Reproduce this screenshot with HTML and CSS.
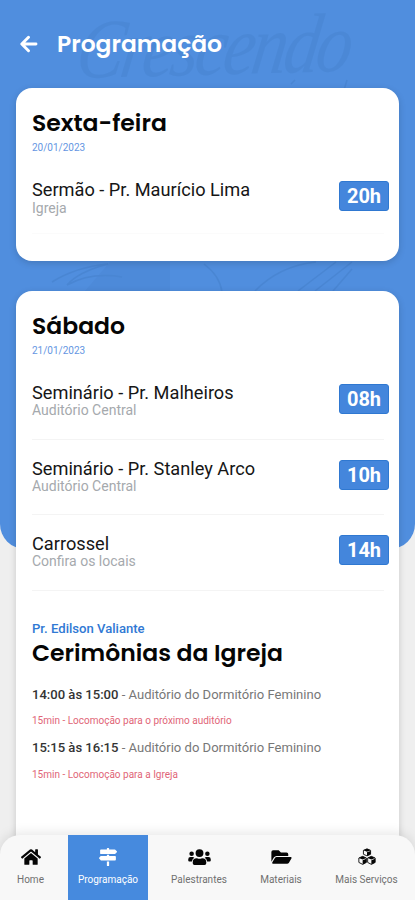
FILE: index.html
```html
<!DOCTYPE html>
<html lang="pt-BR">
<head>
<meta charset="utf-8">
<title>Programação</title>
<link rel="stylesheet" href="styles.css">
</head>
<body>
<main class="screen">
  <div class="backdrop" aria-hidden="true">
    <span class="watermark">Crescendo</span>
    <svg class="sketch" viewBox="0 0 415 549" fill="none">
      <path d="M347 80l-3 10M291 84l4-4M52 282q24-15 56-18-30 8-41 21 24-13 55-8M204 264q16 12 18 28M255 291q24-25 61-29M298 291l38-29M315 291l37-29M333 291l19-22"/>
      <path class="shade" d="M110 262h60v29H85z"/>
    </svg>
  </div>

  <header class="topbar">
    <svg class="back" viewBox="0 0 18 18"><path d="M16 9H2.5M8.5 2.2L1.8 9l6.7 6.8"/></svg>
    <h1>Programação</h1>
  </header>

  <section class="card card-short">
    <h2>Sexta-feira</h2>
    <p class="date">20/01/2023</p>
    <div class="row">
      <div><p class="name">Sermão - Pr. Maurício Lima</p><p class="place">Igreja</p></div>
      <span class="hour">20h</span>
    </div>
  </section>

  <section class="card card-long">
    <h2>Sábado</h2>
    <p class="date">21/01/2023</p>
    <div class="row">
      <div><p class="name">Seminário - Pr. Malheiros</p><p class="place">Auditório Central</p></div>
      <span class="hour">08h</span>
    </div>
    <div class="row">
      <div><p class="name">Seminário - Pr. Stanley Arco</p><p class="place">Auditório Central</p></div>
      <span class="hour">10h</span>
    </div>
    <div class="row">
      <div><p class="name">Carrossel</p><p class="place">Confira os locais</p></div>
      <span class="hour">14h</span>
    </div>
    <p class="speaker">Pr. Edilson Valiante</p>
    <h2>Cerimônias da Igreja</h2>
    <div class="slots">
      <p class="slot"><b>14:00 às 15:00</b> - Auditório do Dormitório Feminino</p>
      <p class="move">15min - Locomoção para o próximo auditório</p>
      <p class="slot"><b>15:15 às 16:15</b> - Auditório do Dormitório Feminino</p>
      <p class="move">15min - Locomoção para a Igreja</p>
    </div>
  </section>

  <nav class="tabs">
    <a class="tab tab-home">
      <svg viewBox="0 0 576 512"><path d="M280 148L96 300v164q0 16 16 16l112-1q16 0 16-16v-95q0-16 16-16h64q16 0 16 16v95q0 16 16 16l112 1q16 0 16-16V300L296 148q-8-6-16 0zM572 251l-84-69V44q0-12-12-12h-56q-12 0-12 12v72l-90-74q-30-24-60 0L4 251q-9 8-2 17l26 31q8 9 17 2L280 107q8-6 16 0l235 194q9 7 17-2l26-31q7-9-2-17z"/></svg>
      <span>Home</span>
    </a>
    <a class="tab tab-program active">
      <svg viewBox="0 0 512 512"><path d="M507 92l-43-43q-7-7-17-7H288V16q0-16-16-16h-32q-16 0-16 16v26H56q-24 0-24 24v80q0 24 24 24h391q10 0 17-7l43-43q11-14 0-28zM224 496q0 16 16 16h32q16 0 16-16V384h-64zm232-272H288v-32h-64v32H65q-10 0-17 7L5 274q-11 14 0 28l43 43q7 7 17 7h391q24 0 24-24v-80q0-24-24-24z"/></svg>
      <span>Programação</span>
    </a>
    <a class="tab tab-speakers">
      <svg viewBox="0 0 640 512"><circle cx="96" cy="160" r="64"/><circle cx="544" cy="160" r="64"/><circle cx="320" cy="144" r="112"/><path d="M64 256h64q25 0 44 18-59 32-68 110H32q-32 0-32-32v-32q0-64 64-64zM576 256h-64q-25 0-44 18 59 32 68 110h72q32 0 32-32v-32q0-64-64-64zM243 288h8q69 32 138 0h8q115 0 115 115v29q0 48-48 48H176q-48 0-48-48v-29q0-115 115-115z"/></svg>
      <span>Palestrantes</span>
    </a>
    <a class="tab tab-files">
      <svg viewBox="0 0 576 512"><path d="M573 292l-73 124q-20 32-54 32H45q-27 0-21-36l73-124q20-32 54-32h400q30 0 22 36zM151 224h329v-48q0-48-48-48H272l-64-64H48Q0 64 0 112v278l70-118q27-48 81-48z"/></svg>
      <span>Materiais</span>
    </a>
    <a class="tab tab-more">
      <svg viewBox="0 0 512 512"><path class="cube" d="M256 24l102 42v112l-102 46-102-46V66zM132 238l106 46v126l-106 56-108-56V284zM380 238l108 46v126l-108 56-106-56V284z"/><path d="M154 66l102 38 102-38-102-42zM256 120v104l102-46V85zM24 284l108 44 106-44-106-46zM132 346v120l106-56V303zM274 284l106 44 108-44-108-46zM380 346v120l108-56V303z"/></svg>
      <span>Mais Serviços</span>
    </a>
  </nav>
</main>
</body>
</html>
```

FILE: styles.css
```css
* { box-sizing: border-box; }
body { margin: 0; background: #efefef; font-family: Roboto, "Liberation Sans", sans-serif; }
h1, h2, p { margin: 0; white-space: nowrap; }
h1, h2 { font-family: Poppins, Inter, sans-serif; font-weight: 600; }

.screen { position: relative; height: 900px; overflow: hidden; padding: 0 16px; }

.backdrop {
  position: absolute; inset: 0 0 auto; height: 549px; overflow: hidden;
  background: #508ede; border-radius: 0 0 25px 25px;
}
.watermark {
  position: absolute; left: 78px; top: -4px;
  font: italic 84px/108px "Liberation Serif", serif; letter-spacing: -4px;
  color: #4884d0; opacity: .5; transform-origin: 0 50%;
  transform: rotate(-1.5deg) skewX(-10deg) scaleX(.85);
}
.sketch { position: absolute; inset: 0; stroke: #4681cc; stroke-width: 1.5; opacity: .6; }
.sketch .shade { fill: #4681cc; stroke: none; opacity: .45; }

.topbar { position: relative; height: 88px; display: flex; align-items: center; gap: 19px; padding-left: 4px; }
.topbar h1 { font-size: 23.4px; line-height: 30px; color: #fff; }
.back { width: 18px; height: 18px; fill: none; stroke: #fff; stroke-width: 2.9; stroke-linecap: round; stroke-linejoin: round; }

.card {
  position: relative; width: 383px; padding: 18px 15px 0 16px;
  background: #fff; border-radius: 16px; box-shadow: 0 2px 7px rgba(0, 0, 0, .16);
}
.card-short { height: 173px; margin-bottom: 30px; }
.card-long { height: 640px; }
.card h2 { font-size: 23.5px; line-height: 34px; color: #050505; }
.date { font-size: 10px; line-height: 16px; color: #6596e2; margin-bottom: 9px; }

.row {
  display: flex; justify-content: space-between; align-items: flex-start;
  height: 75.3px; padding-top: 18px; border-bottom: 1px solid #f4f4f4;
}
.date + .row { height: 72px; padding-top: 14px; }
.card-short .date + .row { border-color: #fbfbfb; height: 69px; }
.name { font-size: 18.2px; line-height: 21px; color: #161616; }
.place { font-size: 14px; line-height: 15px; color: #a5a9ad; }
.card-short .place { line-height: 17px; }
.hour {
  width: 50px; height: 30px; margin: 2px -5px 0 0; border: 1px solid #2f78d1; border-radius: 3px;
  background: #4486dc; color: #fff; font-size: 20px; font-weight: 700; line-height: 29px; text-align: center;
}

.speaker { margin-top: 30px; font-size: 13.1px; line-height: 16px; font-weight: 500; color: #3079d4; }
.card .speaker + h2 { line-height: 32px; }
.slots { padding-top: 13px; }
.slot { font-size: 13.05px; line-height: 26.8px; color: #777; }
.slot b { font-weight: 500; color: #333; }
.move { font-size: 10px; line-height: 26.8px; color: #df6577; }

.tabs {
  position: absolute; inset: 835px 0 0; display: flex;
  background: #f8f8f8; border-radius: 20px 20px 0 0; box-shadow: 0 -2px 12px rgba(0, 0, 0, .1);
}
.tab { display: flex; flex-direction: column; align-items: center; padding-top: 13px; gap: 8px; color: #707070; }
.tab svg { width: 20px; height: 18px; fill: #050505; }
.tab span { font-size: 10px; line-height: 12px; white-space: nowrap; }
.tab-home { width: 68px; padding-right: 7px; }
.tab-program { width: 80px; }
.tab-speakers { width: 102px; }
.tab-speakers svg { width: 23px; }
.tab-files { width: 62px; }
.tab-files svg { width: 21px; }
.tab-more { width: 103px; padding-left: 6px; }
.tab-more .cube { fill: #f8f8f8; stroke: #111; stroke-width: 26; }
.tab.active { background: #468ade; color: #fff; }
.tab.active svg { fill: #fff; }
```
